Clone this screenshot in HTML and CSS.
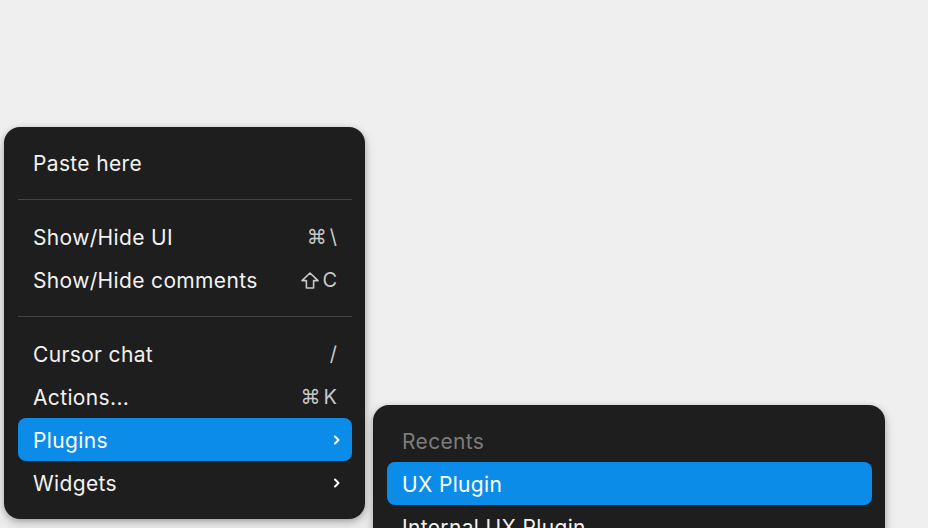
FILE: index.html
```html
<!DOCTYPE html>
<html>
<head>
<meta charset="utf-8">
<link rel="stylesheet" href="styles.css">
</head>
<body>
<div class="canvas">
  <div class="menu main-menu">
    <div class="item"><span class="label">Paste here</span></div>
    <div class="sep"></div>
    <div class="item"><span class="label">Show/Hide UI</span><span class="key"><span class="sym">⌘</span>\</span></div>
    <div class="item"><span class="label">Show/Hide comments</span><span class="key"><svg class="shift" width="18" height="17" viewBox="0 0 18 17"><path d="M9 1 L17 8.6 H12.6 V16 H5.4 V8.6 H1 Z" fill="none" stroke="#c8c8c8" stroke-width="1.6" stroke-linejoin="round"/></svg>C</span></div>
    <div class="sep"></div>
    <div class="item"><span class="label">Cursor chat</span><span class="key">/</span></div>
    <div class="item"><span class="label">Actions...</span><span class="key"><span class="sym">⌘</span>K</span></div>
    <div class="item active"><span class="label">Plugins</span>
      <svg class="chev" width="8" height="12" viewBox="0 0 8 12"><path d="M2 2.5 L5.5 6 L2 9.5" fill="none" stroke="#fff" stroke-width="2" stroke-linecap="round" stroke-linejoin="round"/></svg>
    </div>
    <div class="item"><span class="label">Widgets</span>
      <svg class="chev" width="8" height="12" viewBox="0 0 8 12"><path d="M2 2.5 L5.5 6 L2 9.5" fill="none" stroke="#fff" stroke-width="2" stroke-linecap="round" stroke-linejoin="round"/></svg>
    </div>
  </div>
  <div class="menu sub-menu">
    <div class="item heading"><span class="label">Recents</span></div>
    <div class="item active"><span class="label">UX Plugin</span></div>
    <div class="item"><span class="label">Internal UX Plugin</span></div>
  </div>
</div>
</body>
</html>
```
FILE: styles.css
```css
html, body {
  margin: 0;
  padding: 0;
  background: #efefef;
  width: 928px;
  height: 528px;
  overflow: hidden;
  font-family: Inter, "Noto Sans", "DejaVu Sans", sans-serif;
}
.canvas {
  position: relative;
  width: 928px;
  height: 528px;
}
.menu {
  position: absolute;
  background: #1e1e1e;
  border-radius: 16px;
  padding: 14px 13px 14px 14px;
  box-sizing: border-box;
  box-shadow: 0 2px 6px rgba(0,0,0,0.25), 0 6px 14px rgba(0,0,0,0.12);
  display: flex;
  flex-direction: column;
}
.main-menu {
  left: 4px;
  top: 127px;
  width: 361px;
  height: 392px;
}
.sub-menu {
  left: 373px;
  top: 405px;
  width: 512px;
}
.item {
  height: 43px;
  display: flex;
  align-items: center;
  justify-content: space-between;
  padding: 1px 15px 0;
  border-radius: 8px;
  color: #f2f2f2;
  font-size: 21px;
  letter-spacing: 0.35px;
  box-sizing: border-box;
}
.item.active {
  background: #0c8ce9;
  color: #ffffff;
}
.item.heading {
  color: #7c7c7c;
}
.key {
  color: #c8c8c8;
  display: flex;
  align-items: center;
  gap: 3px;
  letter-spacing: 0;
  font-size: 20px;
}
.sym {
  font-family: "DejaVu Sans", sans-serif;
  font-size: 20px;
}
.shift {
  display: block;
}
.chev {
  display: block;
  margin-right: -4px;
}
.sep {
  height: 1px;
  background: #444444;
  margin: 15px 0;
}
```
